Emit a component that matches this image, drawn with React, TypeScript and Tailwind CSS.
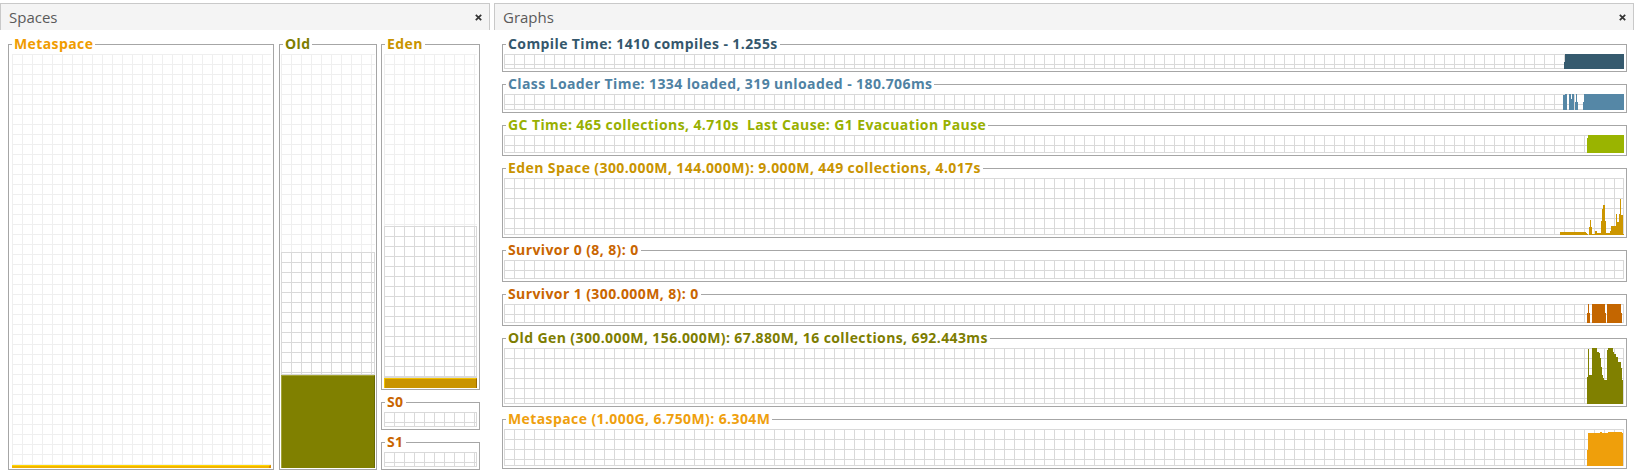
import React from "react";

// grid backgrounds (10px cells)
const GRID_DARK =
  "[background-image:linear-gradient(to_right,#d9d9d9_1px,transparent_1px),linear-gradient(to_bottom,#d9d9d9_1px,transparent_1px)] [background-size:10px_10px] border-r border-b border-[#d9d9d9]";
const GRID_FAINT =
  "[background-image:linear-gradient(to_right,#efefef_1px,transparent_1px),linear-gradient(to_bottom,#efefef_1px,transparent_1px)] [background-size:10px_10px]";

const LEGEND = "px-[2px] text-[14px] leading-[20px] font-bold tracking-[0.4px] whitespace-pre";

type Step = [number, number, number]; // x0, x1, height above baseline

function stepPath(steps: Step[], h: number) {
  return steps.map(([a, b, v]) => `M${a} ${h}V${h - v}H${b}V${h}Z`).join("");
}

function Close() {
  return (
    <svg width="7" height="7" viewBox="0 0 7 7" className="shrink-0">
      <path d="M0.8 0.8L6.2 6.2M6.2 0.8L0.8 6.2" stroke="#333" strokeWidth="1.7" />
    </svg>
  );
}

function Header({ title }: { title: string }) {
  return (
    <div className="h-[27px] flex items-center justify-between border-t border-x border-[#c9c9c9] bg-[#f4f4f4] pl-[8px] pr-[7px]">
      <span className="text-[15px] text-[#5a5a5a] leading-none">{title}</span>
      <Close />
    </div>
  );
}

type Graph = {
  title: string;
  color: string;
  fill: string;
  h: number;
  steps: Step[];
};

const graphs: Graph[] = [
  {
    title: "Compile Time: 1410 compiles - 1.255s",
    color: "text-[#34576c]",
    fill: "#355a6e",
    h: 15,
    steps: [
      [1563.5, 1564.5, 7],
      [1564.5, 1624, 15],
    ],
  },
  {
    title: "Class Loader Time: 1334 loaded, 319 unloaded - 180.706ms",
    color: "text-[#4f82a3]",
    fill: "#5587a6",
    h: 16,
    steps: [
      [1562.7, 1563.3, 8],
      [1563.3, 1564.5, 15],
      [1564.5, 1566.7, 16],
      [1569.3, 1570.5, 16],
      [1570.5, 1571.5, 11],
      [1571.5, 1573.7, 16],
      [1575.3, 1576, 8],
      [1576, 1577, 16],
      [1577, 1578, 8],
      [1582.7, 1584, 8],
      [1584, 1624, 16],
    ],
  },
  {
    title: "GC Time: 465 collections, 4.710s  Last Cause: G1 Evacuation Pause",
    color: "text-[#98b000]",
    fill: "#9ab400",
    h: 18,
    steps: [
      [1587, 1588, 15],
      [1588, 1624, 18],
    ],
  },
  {
    title: "Eden Space (300.000M, 144.000M): 9.000M, 449 collections, 4.017s",
    color: "text-[#c99400]",
    fill: "#cc9600",
    h: 57,
    steps: [
      [1560, 1586, 3.5],
      [1586, 1587, 2],
      [1587, 1588, 1],
      [1589, 1590, 8],
      [1590, 1591.3, 15.5],
      [1591.3, 1592, 8],
      [1592, 1595, 1],
      [1595, 1597, 4.5],
      [1597, 1600.5, 2.5],
      [1600.5, 1601.5, 14],
      [1601.5, 1602.5, 26],
      [1602.5, 1604.5, 30],
      [1604.5, 1605.5, 14],
      [1605.5, 1609.5, 2],
      [1609.5, 1611, 4],
      [1611, 1615.5, 9.5],
      [1615.5, 1616.5, 21.5],
      [1616.5, 1618.5, 13],
      [1618.5, 1619.5, 21],
      [1619.5, 1620.5, 36.5],
      [1620.5, 1622.5, 20],
      [1622.5, 1624, 1],
    ],
  },
  {
    title: "Survivor 0 (8, 8): 0",
    color: "text-[#c96500]",
    fill: "#c46600",
    h: 19,
    steps: [],
  },
  {
    title: "Survivor 1 (300.000M, 8): 0",
    color: "text-[#c96500]",
    fill: "#c46600",
    h: 19,
    steps: [
      [1587.3, 1588.3, 10],
      [1588.3, 1589, 19],
      [1589, 1590, 10],
      [1591.5, 1605.3, 19],
      [1605.3, 1606, 10],
      [1607.3, 1620.7, 19],
      [1620.7, 1622, 10],
    ],
  },
  {
    title: "Old Gen (300.000M, 156.000M): 67.880M, 16 collections, 692.443ms",
    color: "text-[#7d7d00]",
    fill: "#808000",
    h: 56,
    steps: [
      [1587.3, 1588.3, 27],
      [1588.3, 1589, 55],
      [1589, 1591.7, 29],
      [1591.7, 1596.7, 56],
      [1596.7, 1599.3, 52],
      [1599.3, 1600, 51],
      [1600, 1601, 46],
      [1601, 1601.7, 37],
      [1601.7, 1602.7, 29],
      [1602.7, 1604, 26],
      [1604, 1606.7, 24],
      [1606.7, 1607.3, 46],
      [1607.3, 1608.3, 54],
      [1608.3, 1613.3, 56],
      [1613.3, 1614, 52],
      [1614, 1616, 50],
      [1616, 1618.3, 47],
      [1618.3, 1620.7, 42],
      [1620.7, 1622, 36],
      [1622, 1623.3, 24],
    ],
  },
  {
    title: "Metaspace (1.000G, 6.750M): 6.304M",
    color: "text-[#ef9f0e]",
    fill: "#ef9f0b",
    h: 37,
    steps: [
      [1587.3, 1588.3, 16],
      [1588.3, 1600, 32.7],
      [1600, 1602, 33.7],
      [1602, 1608, 32.7],
      [1608, 1621.7, 33.7],
      [1621.7, 1623.3, 32.7],
    ],
  },
];

function GraphBox({ g }: { g: Graph }) {
  return (
    <fieldset className="min-w-0 border border-[#a6a6a6] pl-[1px] pr-[2px] pb-[2px]">
      <legend className={`ml-[2px] ${LEGEND} ${g.color}`}>{g.title}</legend>
      <div className={`relative w-[1120px] ${GRID_DARK}`} style={{ height: g.h }}>
        {g.steps.length > 0 && (
          <svg
            className="absolute top-0 -right-px w-[64px] h-[calc(100%+1px)]"
            viewBox={`1560 0 64 ${g.h}`}
            preserveAspectRatio="none"
            shapeRendering="crispEdges"
          >
            <path d={stepPath(g.steps, g.h)} fill={g.fill} />
          </svg>
        )}
      </div>
    </fieldset>
  );
}

export default function App() {
  return (
    <div className="w-[1636px] h-[476px] bg-white flex gap-[4px] pt-[3px] pr-[2px] font-['Open_Sans',sans-serif]">
      {/* Spaces */}
      <section className="w-[490px] flex flex-col">
        <Header title="Spaces" />
        <div className="flex gap-[4px] pt-[4px] pl-[8px]">
          {/* Metaspace */}
          <fieldset className="w-[266px] mr-[1px] min-w-0 border border-[#a6a6a6] pl-[3px] pr-[2px] pb-[1px]">
            <legend className={`ml-[0px] ${LEGEND} text-[#f09c00]`}>Metaspace</legend>
            <div className={`h-[414px] flex flex-col justify-end ${GRID_FAINT}`}>
              <div className="h-[3px] bg-[#f2b400] border-t border-[#ffd800] border-r-2 border-r-[#d98a00]" />
            </div>
          </fieldset>

          {/* Old */}
          <fieldset className="w-[98px] min-w-0 border border-[#a6a6a6] px-[1px] pb-[1px]">
            <legend className={`ml-[2px] ${LEGEND} text-[#7d7d00]`}>Old</legend>
            <div className="h-[414px] flex flex-col">
              <div className={`h-[198px] ${GRID_FAINT}`} />
              <div className={`h-[123px] ${GRID_DARK}`} />
              <div className="h-[93px] bg-[#808000] border-t border-l border-[#a3a335] border-r border-r-[#6a6a00]" />
            </div>
          </fieldset>

          {/* Eden / S0 / S1 */}
          <div className="w-[99px] flex flex-col gap-[2px]">
            <fieldset className="min-w-0 border border-[#a6a6a6] px-[2px] pb-[1px]">
              <legend className={`ml-[1px] ${LEGEND} text-[#c99400]`}>Eden</legend>
              <div className="h-[334px] flex flex-col">
                <div className={`h-[172px] ${GRID_FAINT}`} />
                <div className={`h-[152px] ${GRID_DARK}`} />
                <div className="h-[10px] bg-[#c99400] border-t border-l border-[#f3c300] border-r border-r-[#9a6a00]" />
              </div>
            </fieldset>
            <fieldset className="min-w-0 border border-[#a6a6a6] px-[2px] pb-[2px]">
              <legend className={`ml-[1px] ${LEGEND} text-[#c96500]`}>S0</legend>
              <div className={`h-[15px] ${GRID_DARK}`} />
            </fieldset>
            <fieldset className="min-w-0 border border-[#a6a6a6] px-[2px] pb-[2px]">
              <legend className={`ml-[1px] ${LEGEND} text-[#c96500]`}>S1</legend>
              <div className={`h-[15px] ${GRID_DARK}`} />
            </fieldset>
          </div>
        </div>
      </section>

      {/* Graphs */}
      <section className="flex-1 flex flex-col">
        <Header title="Graphs" />
        <div className="flex flex-col gap-[2px] pt-[4px] pl-[8px] pr-[7px]">
          {graphs.map((g) => (
            <GraphBox key={g.title} g={g} />
          ))}
        </div>
      </section>
    </div>
  );
}
